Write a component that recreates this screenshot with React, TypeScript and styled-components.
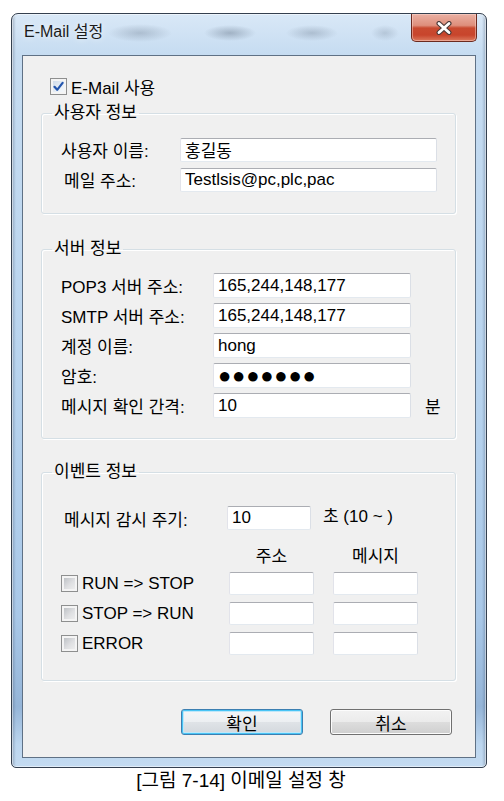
import React from "react";
import styled, { createGlobalStyle } from "styled-components";

const FONT = `"Liberation Sans", "Noto Sans CJK KR", sans-serif`;

const GlobalStyle = createGlobalStyle`
  html, body {
    margin: 0;
    padding: 0;
    background: #fff;
  }
  body {
    font-family: ${FONT};
    color: #000;
  }
`;

const Page = styled.div`
  width: 504px;
  padding: 13px 0 0 11px;
  box-sizing: border-box;
`;

const Window = styled.div`
  width: 476px;
  box-sizing: border-box;
  border: 1px solid #34404f;
  border-radius: 7px 7px 5px 5px;
  padding: 0 10px 9px;
  background:
    linear-gradient(to right, rgba(45, 62, 88, 0.3) 0, rgba(45, 62, 88, 0) 4px, rgba(45, 62, 88, 0) calc(100% - 4px), rgba(45, 62, 88, 0.3) 100%),
    linear-gradient(to bottom, #d9e8f7 0, #c6dcf1 40px, #b7d3ee 50%, #a9c8e8 80%, #95b5d8 92%, #bcd6ef 97%, #c4dbf1 100%);
  box-shadow: inset 0 0 0 1px rgba(255, 255, 255, 0.5);
`;

const TitleBar = styled.div`
  height: 41px;
  display: flex;
  justify-content: space-between;
  align-items: flex-start;
  padding-left: 2px;
  margin-right: -1px;
  background:
    radial-gradient(ellipse 32px 9px at 118px 19px, rgba(70, 85, 105, 0.26), rgba(70, 85, 105, 0)),
    radial-gradient(ellipse 26px 8px at 208px 19px, rgba(60, 75, 95, 0.32), rgba(60, 75, 95, 0)),
    radial-gradient(ellipse 26px 8px at 290px 19px, rgba(70, 85, 105, 0.26), rgba(70, 85, 105, 0)),
    radial-gradient(ellipse 14px 8px at 363px 19px, rgba(70, 85, 105, 0.2), rgba(70, 85, 105, 0));
`;

const Title = styled.div`
  padding-top: 8px;
  font-family: ${FONT};
  font-size: 16px;
  line-height: 20px;
  color: #1b1b1b;
  text-shadow: 0 0 6px rgba(255, 255, 255, 0.9);
`;

const CloseButton = styled.div`
  width: 66px;
  height: 28px;
  box-sizing: border-box;
  border: 1px solid #6b2a1f;
  border-top: none;
  border-radius: 0 0 5px 5px;
  background: linear-gradient(to bottom, #eab0a3 0%, #de8f7c 42%, #c94a30 52%, #c8452c 78%, #dc7a5e 100%);
  box-shadow: inset 0 0 0 1px rgba(255, 225, 215, 0.45);
  display: flex;
  align-items: center;
  justify-content: center;
`;

const Client = styled.div`
  height: 703px;
  box-sizing: border-box;
  border: 1px solid #5f7185;
  background: #f0f0f0;
  padding: 20px 19px 22px 18px;
  display: flex;
  flex-direction: column;
`;

const CheckLine = styled.label<{ $indent?: number }>`
  display: flex;
  align-items: center;
  gap: 4px;
  height: 20px;
  margin-left: ${(p) => p.$indent ?? 0}px;
  font-size: 17px;
  white-space: nowrap;
`;

const CheckBox = styled.span<{ $checked?: boolean }>`
  width: 17px;
  height: 17px;
  flex: none;
  box-sizing: border-box;
  border: 1px solid #8e8f8f;
  background: ${(p) =>
    p.$checked
      ? "linear-gradient(135deg, #c9d6e6 0%, #eef3f8 70%, #f7f9fb 100%)"
      : "linear-gradient(135deg, #b4b8bd 0%, #dfe0e2 55%, #f2f2f2 100%)"};
  box-shadow: inset 0 0 0 2px #f4f4f4;
  display: flex;
  align-items: center;
  justify-content: center;
`;

const Group = styled.fieldset<{ $top: number; $pt: number; $pb: number }>`
  margin: ${(p) => p.$top}px 0 0;
  padding: ${(p) => p.$pt}px 18px ${(p) => p.$pb}px 19px;
  border: 1px solid #d5dfe5;
  border-radius: 3px;
  box-shadow: inset 1px 1px 0 #fff, 1px 1px 0 #fff;
  min-width: 0;
  display: flex;
  flex-direction: column;
`;

const Legend = styled.legend`
  margin-left: -9px;
  padding: 0 2px;
  font-size: 17px;
  line-height: 22px;
`;

const Rows = styled.div<{ $gap: number }>`
  display: flex;
  flex-direction: column;
  gap: ${(p) => p.$gap}px;
`;

const Row = styled.div<{ $label: number; $h: number; $top?: number }>`
  display: grid;
  grid-template-columns: ${(p) => p.$label}px auto auto;
  align-items: center;
  height: ${(p) => p.$h}px;
  margin-top: ${(p) => p.$top ?? 0}px;
  justify-content: start;
`;

const Label = styled.span<{ $indent?: number }>`
  font-size: 17px;
  white-space: nowrap;
  padding-left: ${(p) => p.$indent ?? 0}px;
`;

const Field = styled.input<{ $w: number; $h: number; $dots?: boolean }>`
  width: ${(p) => p.$w}px;
  height: ${(p) => p.$h}px;
  box-sizing: border-box;
  margin: 0;
  padding: 0 4px;
  border: 1px solid;
  border-color: #abadb3 #dbdfe6 #e3e9ef #e2e3ea;
  border-radius: 2px;
  background: #fff;
  outline: none;
  color: #000;
  font-family: ${FONT};
  font-size: ${(p) => (p.$dots ? 22 : 17)}px;
  letter-spacing: ${(p) => (p.$dots ? "0.8px" : "0")};
`;

const Unit = styled.span<{ $gap: number; $raise?: number }>`
  margin-left: ${(p) => p.$gap}px;
  margin-bottom: ${(p) => p.$raise ?? 0}px;
  font-size: 17px;
  white-space: nowrap;
`;

const EventGrid = styled.div`
  display: grid;
  grid-template-columns: 149px 85px 85px;
  column-gap: 19px;
  row-gap: 7px;
  margin-top: 21px;
  align-items: center;
`;

const ColHead = styled.div`
  text-align: center;
  font-size: 17px;
  line-height: 20px;
  margin-bottom: -2px;
`;

const Buttons = styled.div`
  display: flex;
  justify-content: flex-end;
  gap: 27px;
  margin-top: 28px;
  padding-right: 4px;
`;

const Button = styled.button<{ $default?: boolean }>`
  width: 122px;
  height: 26px;
  box-sizing: border-box;
  padding: 0;
  border: 1px solid ${(p) => (p.$default ? "#3c7fb1" : "#707070")};
  border-radius: 3px;
  background: ${(p) =>
    p.$default
      ? "linear-gradient(to bottom, #f4f6f8 0%, #eceff2 50%, #dfe3e7 51%, #d3d8dd 100%)"
      : "linear-gradient(to bottom, #f2f2f2 0%, #ebebeb 50%, #dddddd 51%, #cfcfcf 100%)"};
  box-shadow: ${(p) =>
    p.$default ? "inset 0 0 0 1px #48c4f5, inset 0 0 0 2px #bfe7f9" : "inset 0 0 0 1px #fcfcfc"};
  font-family: ${FONT};
  font-size: 17px;
  color: #000;
`;

const Caption = styled.div`
  width: 476px;
  padding-right: 16px;
  box-sizing: border-box;
  text-align: center;
  font-family: ${FONT};
  font-size: 19px;
  line-height: 24px;
  margin-top: 1px;
`;

const Check = ({ checked }: { checked?: boolean }) => (
  <CheckBox $checked={checked}>
    {checked && (
      <svg width="11" height="11" viewBox="0 0 11 11">
        <path d="M1.5 5.8 L4.2 8.8 L9.6 1.8" fill="none" stroke="#2355ad" strokeWidth="2.2" strokeLinecap="round" strokeLinejoin="round" />
      </svg>
    )}
  </CheckBox>
);

const CloseIcon = () => (
  <svg width="18" height="14" viewBox="0 0 18 14">
    <path d="M4 2.5 L14 11.5 M14 2.5 L4 11.5" stroke="#4a3a38" strokeWidth="5" strokeLinecap="round" />
    <path d="M4 2.5 L14 11.5 M14 2.5 L4 11.5" stroke="#ffffff" strokeWidth="2.8" strokeLinecap="round" />
  </svg>
);

const serverRows = [
  { label: "POP3 서버 주소:", value: "165,244,148,177" },
  { label: "SMTP 서버 주소:", value: "165,244,148,177" },
  { label: "계정 이름:", value: "hong" },
  { label: "암호:", value: "●●●●●●●", dots: true },
  { label: "메시지 확인 간격:", value: "10", unit: "분" },
];

const events = ["RUN => STOP", "STOP => RUN", "ERROR"];

const App: React.FC = () => {
  return (
    <Page>
      <GlobalStyle />
      <Window>
        <TitleBar>
          <Title>E-Mail 설정</Title>
          <CloseButton>
            <CloseIcon />
          </CloseButton>
        </TitleBar>
        <Client>
          <CheckLine $indent={9}>
            <Check checked />
            E-Mail 사용
          </CheckLine>

          <Group $top={6} $pt={13} $pb={22}>
            <Legend>사용자 정보</Legend>
            <Rows $gap={6}>
              <Row $label={119} $h={24}>
                <Label>사용자 이름:</Label>
                <Field $w={257} $h={24} readOnly value="홍길동" />
              </Row>
              <Row $label={119} $h={24}>
                <Label $indent={3}>메일 주소:</Label>
                <Field $w={257} $h={24} readOnly value="Testlsis@pc,plc,pac" />
              </Row>
            </Rows>
          </Group>

          <Group $top={24} $pt={13} $pb={20}>
            <Legend>서버 정보</Legend>
            <Rows $gap={5}>
              {serverRows.map((r) => (
                <Row key={r.label} $label={152} $h={25}>
                  <Label>{r.label}</Label>
                  <Field $w={198} $h={25} $dots={r.dots} readOnly value={r.value} />
                  {r.unit && <Unit $gap={14}>{r.unit}</Unit>}
                </Row>
              ))}
            </Rows>
          </Group>

          <Group $top={22} $pt={19} $pb={25}>
            <Legend>이벤트 정보</Legend>
            <Row $label={166} $h={24}>
              <Label $indent={3}>메시지 감시 주기:</Label>
              <Field $w={84} $h={24} readOnly value="10" />
              <Unit $gap={12} $raise={7}>초 (10 ~ )</Unit>
            </Row>
            <EventGrid>
              <span />
              <ColHead>주소</ColHead>
              <ColHead>메시지</ColHead>
              {events.map((e) => (
                <React.Fragment key={e}>
                  <CheckLine>
                    <Check />
                    {e}
                  </CheckLine>
                  <Field $w={85} $h={23} readOnly value="" />
                  <Field $w={85} $h={23} readOnly value="" />
                </React.Fragment>
              ))}
            </EventGrid>
          </Group>

          <Buttons>
            <Button $default>확인</Button>
            <Button>취소</Button>
          </Buttons>
        </Client>
      </Window>
      <Caption>[그림 7-14] 이메일 설정 창</Caption>
    </Page>
  );
};

export default App;
